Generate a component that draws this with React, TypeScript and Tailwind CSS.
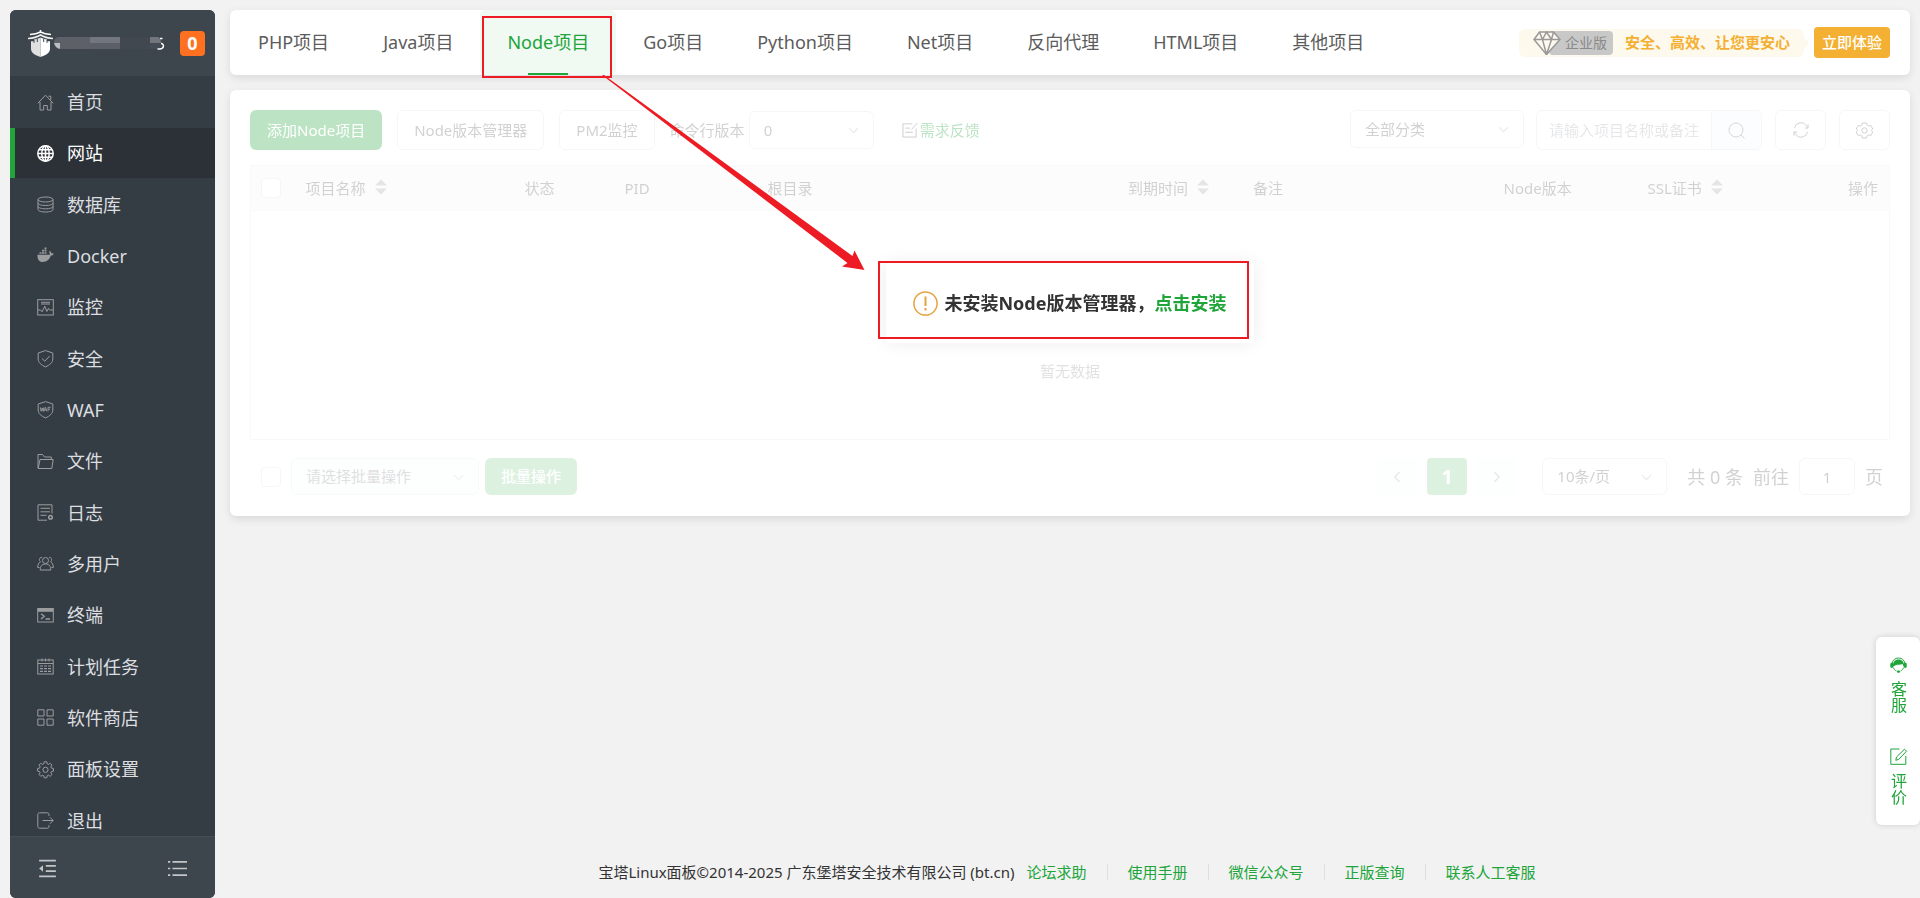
import type { ReactNode } from "react";
import { ChevronDown, ChevronLeft, ChevronRight } from "lucide-react";

const menuItems = [
  { id: "home", label: "首页" },
  { id: "site", label: "网站" },
  { id: "database", label: "数据库" },
  { id: "docker", label: "Docker" },
  { id: "monitor", label: "监控" },
  { id: "security", label: "安全" },
  { id: "waf", label: "WAF" },
  { id: "files", label: "文件" },
  { id: "logs", label: "日志" },
  { id: "users", label: "多用户" },
  { id: "terminal", label: "终端" },
  { id: "cron", label: "计划任务" },
  { id: "store", label: "软件商店" },
  { id: "settings", label: "面板设置" },
  { id: "logout", label: "退出" },
];

const tabs = ["PHP项目", "Java项目", "Node项目", "Go项目", "Python项目", "Net项目", "反向代理", "HTML项目", "其他项目"];

const columns = [
  { label: "项目名称", width: "w-[219px]", sortable: true },
  { label: "状态", width: "w-[100px]" },
  { label: "PID", width: "w-[143px]" },
  { label: "根目录", width: "w-[22%]" },
  { label: "到期时间", width: "w-[125px]", sortable: true },
  { label: "备注", width: "" },
  { label: "Node版本", width: "w-36" },
  { label: "SSL证书", width: "w-[133px]", sortable: true },
];

const footerLinks = ["论坛求助", "使用手册", "微信公众号", "正版查询", "联系人工客服"];

// Line icons of the menu, drawn on a 17px grid
const menuIcons: Record<string, ReactNode> = {
  home: (
    <>
      <path d="M.8 9.3 8.5 1.2l7.7 8.1" />
      <path d="M3 8v8h3.7v-4.5h3.6V16H14V8" />
      <path d="M11.5 2.2h2.3v3.5" />
    </>
  ),
  site: (
    <>
      <circle cx="8.5" cy="8.5" r="7.7" strokeWidth="1.5" />
      <ellipse cx="8.5" cy="8.5" rx="3.7" ry="7.7" strokeWidth="1.5" />
      <path d="M8.5 1v15M1 8.5h15M2 4.8h13M2 12.2h13" strokeWidth="1.5" />
    </>
  ),
  database: (
    <>
      <ellipse cx="8.5" cy="3.5" rx="7.5" ry="2.5" />
      <path d="M1 3.5v10C1 15 4.4 16 8.5 16s7.5-1 7.5-2.5v-10" />
      <path d="M1 7c0 1.5 3.4 2.5 7.5 2.5S16 8.5 16 7M1 10.3c0 1.5 3.4 2.5 7.5 2.5s7.5-1 7.5-2.5" />
    </>
  ),
  docker: (
    <>
      <path
        d="M.5 7.8h12.2c.2-1.2 0-2.2-.6-3l.8-.8c.9.6 1.3 1.4 1.4 2.2 1 0 1.8.1 2.4.5-.5 1.3-1.5 1.8-2.9 1.9-1.4 4.3-4 6.4-8.3 6.4C2 15 .3 12 .5 7.8z"
        fill="currentColor"
        stroke="none"
      />
      <path d="M2.5 6h2M5 6h2M7.5 6h2M5 3.7h2M7.5 3.7h2M7.5 1.4h2" strokeWidth="1.7" />
    </>
  ),
  monitor: (
    <>
      <rect x=".7" y=".7" width="15.6" height="15.3" />
      <path d="M4 3.3h9M4 5h9" />
      <path d="M1 11h2.5L5 12.8 7.8 7.2l2 5.3 1.6-3.2 1.1 1.7H16" />
    </>
  ),
  security: (
    <>
      <path d="M8.5.6 1.2 3v6c0 3.5 3 6 7.3 7.9 4.3-1.9 7.3-4.4 7.3-7.9V3z" />
      <path d="m5 8.5 2.8 2.7L12.6 6" />
    </>
  ),
  waf: (
    <>
      <path d="M8.5.6 1.2 3v6c0 3.5 3 6 7.3 7.9 4.3-1.9 7.3-4.4 7.3-7.9V3z" />
      <path d="m3.3 6.3.9 4L5.2 7l1 3.3.7-4M7 10.3l1.5-4 1.3 4M7.6 9h1.8M11 10.3v-4h2.6M11 8.2h2.2" strokeWidth=".9" />
    </>
  ),
  files: (
    <>
      <path d="M1 15V1.5h4.5L7.5 4h6.8v2.5" />
      <path d="M3 6.5h13.2L14.8 15.5H1.2z" />
    </>
  ),
  logs: (
    <>
      <path d="M15 9.5V.8H1v15.4h9" />
      <path d="M3.5 4.3H13M3.5 7.8H13M3.5 11.3h6" />
      <circle cx="13.5" cy="13.3" r="1.8" strokeWidth="1.5" />
    </>
  ),
  users: (
    <>
      <circle cx="8.5" cy="5.5" r="3" />
      <path d="M3.2 15c0-3.5 1.5-6 5.3-6s5.3 2.5 5.3 6z" />
      <path d="M5 2.4c-2.6-.4-3.5 3-1.5 4.4C1.6 7.6.7 10 .7 12.5h1.8M12 2.4c2.6-.4 3.5 3 1.5 4.4 1.9.8 2.8 3.2 2.8 5.7h-1.8" />
    </>
  ),
  terminal: (
    <>
      <rect x=".7" y="1.5" width="15.6" height="13.5" />
      <path d="M.7 3.3h15.6" strokeWidth="3" />
      <path d="m4 6.8 3.3 2.5L4 12M8.5 12h4.5" strokeWidth="1.3" />
    </>
  ),
  cron: (
    <>
      <rect x=".8" y="2" width="15.4" height="14" />
      <path d="M1 5.5h15M5 .5v3M8.5.5v3M12 .5v3" />
      <path d="M3 8h3M7 8h3M11 8h3M3 10.7h3M7 10.7h3M11 10.7h3M3 13.3h3M7 13.3h3M11 13.3h3" strokeWidth="1.2" />
    </>
  ),
  store: <path d="M.8.8H7V7H.8zM10 .8h6.2V7H10zM.8 10H7v6.2H.8zM10 10h6.2v6.2H10z" />,
  settings: (
    <>
      <path d="M7.2.8h2.6l.4 2 1.3.6 1.7-1.1 1.8 1.8-1.1 1.7.5 1.3 2.1.4v2.6l-2.1.4-.5 1.3 1.1 1.7-1.8 1.8-1.7-1.1-1.3.6-.4 2H7.2l-.4-2-1.3-.6-1.7 1.1L2 13.5l1.1-1.7-.5-1.3-2-.4V7.5l2-.4.5-1.3L2 4.1l1.8-1.8 1.7 1.1 1.3-.6z" />
      <circle cx="8.5" cy="8.8" r="2.6" />
    </>
  ),
  logout: (
    <>
      <path d="M12 4V2.5c0-1-.6-1.7-1.6-1.7H2.5C1.5.8.8 1.5.8 2.5v12c0 1 .7 1.7 1.7 1.7h7.9c1 0 1.6-.7 1.6-1.7V13" />
      <path d="M5.5 8.5H16M13 5.3l3.2 3.2-3.2 3.2" />
    </>
  ),
};

function LineIcon({ children, className = "" }: { children: ReactNode; className?: string }) {
  return (
    <svg viewBox="0 0 17 17" fill="none" stroke="currentColor" aria-hidden="true" className={`shrink-0 overflow-visible ${className}`}>
      {children}
    </svg>
  );
}

function Sidebar() {
  return (
    <aside className="mt-2.5 ml-2.5 flex w-[205px] shrink-0 flex-col overflow-hidden rounded-md bg-[#353d44]">
      <div className="flex h-[66px] shrink-0 items-center bg-[#3d454d] pr-2.5 pl-[18px]">
        {/* pagoda logo */}
        <svg viewBox="0 0 25 27" className="h-[27px] w-[25px] shrink-0" aria-hidden="true">
          <path d="M12.500 0v3M2 4.500c5-.2 8-1.200 10.500-2.500 2.500 1.300 5.500 2.300 10.500 2.500" fill="none" stroke="#fff" strokeWidth="1.500" />
          <path d="M0 8.500c5-.4 9.500-1.700 12.500-3.500 3 1.800 7.500 3.100 12.500 3.500" fill="none" stroke="#eee" strokeWidth="1.700" />
          <path d="M12.500 7.500c-2 1-4.500 1.700-6.500 2v1.700H3v7.600c0 4 4 6.700 9.500 8.200z" fill="#e0e0e0" />
          <path d="M12.500 7.500c2 1 4.500 1.700 6.500 2v1.700h3v7.600c0 4-4 6.700-9.500 8.200z" fill="#fff" />
          <path d="M6 9.800v3M9.300 9v3M15.700 9v3M19 9.800v3" stroke="#3d454d" />
        </svg>
        {/* masked server address */}
        <svg viewBox="0 0 112 17" className="h-[17px] w-28" aria-hidden="true">
          <path d="M7 2h30v12H7z" fill="#5d6067" />
          <path d="M37 2h30v12H37z" fill="#5b6068" />
          <path d="M37 2h30v6H37z" fill="#73777d" />
          <path d="M67 2h30v12H67z" fill="#414850" />
          <path d="M97 2h8q3 1 3 6H97z" fill="#73777d" />
          <path d="M97 8h10v6H97z" fill="#454b54" />
          <path d="M7 2H5Q1 3 1 8h6z" fill="#5d6067" />
          <path d="M1 8h6v6Q2 13 1 8z" fill="#b9bcc0" />
          <path d="M107 3.500h2.500M108 8.500c3.500 0 3.500 5.500-1.500 5.500h-2" fill="none" stroke="#fff" strokeWidth="1.500" />
        </svg>
        <span className="ml-auto flex size-[25px] items-center justify-center rounded bg-[#ff7021] text-lg font-bold text-white">0</span>
      </div>
      <nav className="min-h-0 flex-1 overflow-hidden">
        <ul className="grid h-[771px] auto-rows-fr pt-px">
          {menuItems.map((item) => {
            const isActive = item.id === "site";
            return (
              <li key={item.id}>
                <a
                  href={`#${item.id}`}
                  className={`flex h-[50px] items-center gap-[13px] border-l-5 pl-[22px] text-lg ${
                    isActive ? "border-[#20a53a] bg-[#2c3138] text-white" : "border-transparent text-[#dcdee0]"
                  }`}
                >
                  <LineIcon className={`size-[17px] ${isActive ? "text-white" : "text-[#9b9d9f]"}`}>{menuIcons[item.id]}</LineIcon>
                  {item.label}
                </a>
              </li>
            );
          })}
        </ul>
      </nav>
      <div className="flex h-[62px] shrink-0 items-center justify-between border-t border-[#454d55] bg-[#3d454d] px-7 pt-0.5 text-[#c3c5c7]">
        <button type="button" aria-label="收起菜单">
          <LineIcon className="size-[19px]">
            <path d="M1 1.500h15M7 6.200h9M7 10.800h9M1 15.500h15" strokeWidth="1.500" />
            <path d="M1 8.500 4.500 5.500v6z" fill="currentColor" stroke="none" />
          </LineIcon>
        </button>
        <button type="button" aria-label="菜单列表">
          <LineIcon className="size-[19px]">
            <path d="M4 2.500h13M4 8.500h13M4 14.500h13M0 2.500h2M0 8.500h2M0 14.500h2" strokeWidth="1.500" />
          </LineIcon>
        </button>
      </div>
    </aside>
  );
}

function TopTabs() {
  return (
    <header className="flex h-[65px] items-center rounded-md bg-white pr-5 pl-px shadow-[0_3px_8px_rgba(0,0,0,0.1)]">
      <nav className="flex h-full">
        {tabs.map((tab) => {
          const isActive = tab === "Node项目";
          return (
            <a
              key={tab}
              href={`#${tab}`}
              className={`relative flex items-center rounded-md px-[27px] pb-0.5 text-lg whitespace-nowrap ${
                isActive ? "bg-[#f0f9f2] text-[#20a53a]" : "text-[#5c5c5c]"
              }`}
            >
              {tab}
              {isActive && (
                <>
                  <span className="absolute bottom-0 left-1/2 h-0.5 w-10 -translate-x-1/2 bg-[#20a53a]" />
                  <span className="absolute top-1.5 right-1 -bottom-[3px] left-0.5 z-10 border-2 border-[#ed1c24]" />
                </>
              )}
            </a>
          );
        })}
      </nav>
      <div className="ml-auto flex items-center gap-2.5 whitespace-nowrap">
        <div className="relative flex h-7 items-center rounded-md bg-[#fef9ed] px-3.5">
          <svg viewBox="0 0 28 24" className="z-10 h-6 w-7" fill="none" stroke="#999" strokeWidth="1.500" aria-hidden="true">
            <path d="M6.500 1h14L27 8.500 13.500 23.500 1 8.500z" fill="#fef9ed" />
            <path d="M1 8.500h26M6.500 1l3 7.500 4 15 5-15L20.500 1M9.500 8.500 13.500 1l5 7.500" />
          </svg>
          <span className="-ml-3 flex h-6 items-center rounded-sm bg-[#c8c8c8] pr-1.5 pl-4 text-sm text-[#8a8a8a]">企业版</span>
          <span className="ml-3 text-[15px] font-bold text-[#f3b033]">安全、高效、让您更安心</span>
          <span className="absolute top-1/2 -right-1 size-2 -translate-y-1/2 rotate-45 bg-[#fef9ed]" />
        </div>
        <button type="button" className="h-[31px] rounded-sm bg-[#f3b033] px-2 text-[15px] font-medium text-white">
          立即体验
        </button>
      </div>
    </header>
  );
}

function SelectBox({ label, value, className = "" }: { label: string; value: string; className?: string }) {
  return (
    <span className={`relative block ${className}`}>
      <select
        aria-label={label}
        defaultValue={value}
        className="h-full w-full appearance-none rounded-md border border-[#dcdfe6] bg-transparent pl-3.5 text-[15px] text-[#666]"
      >
        <option>{value}</option>
      </select>
      <ChevronDown size={17} strokeWidth={1.5} className="pointer-events-none absolute top-[11px] right-3 text-[#b0b4bb]" />
    </span>
  );
}

function SortIcon() {
  return (
    <svg viewBox="0 0 12 16" className="mb-0.5 h-4 w-3" fill="#a4a8ae" aria-hidden="true">
      <path d="M6 .500 12 6.500H0zM6 15.500 12 9.500H0z" />
    </svg>
  );
}

function Toolbar() {
  return (
    <div className="flex items-center text-[15px] whitespace-nowrap text-[#666]">
      <button type="button" className="h-10 rounded-md bg-[#20a53a] px-[17px] text-white">
        添加Node项目
      </button>
      <button type="button" className="ml-[15px] h-10 rounded-md border border-[#dcdfe6] px-4">
        Node版本管理器
      </button>
      <button type="button" className="ml-[15px] h-10 rounded-md border border-[#dcdfe6] px-4">
        PM2监控
      </button>
      <span className="ml-[15px]">命令行版本</span>
      <SelectBox label="命令行版本" value="0" className="ml-1 h-[38px] w-[125px]" />
      <a href="#feedback" className="ml-7 flex items-center gap-0.5 text-[#20a53a]">
        <LineIcon className="size-4 text-[#555]">
          <path d="M11 2H1v14h14V7M3.500 6.500h5M3.500 11h8M10 8l6.500-7" />
        </LineIcon>
        需求反馈
      </a>
      <SelectBox label="分类" value="全部分类" className="mr-3 mb-0.5 ml-auto h-[38px] w-[174px]" />
      <div className="flex h-10 w-[226px] overflow-hidden rounded-md border border-[#dcdfe6]">
        <input
          type="text"
          aria-label="搜索项目"
          placeholder="请输入项目名称或备注"
          className="min-w-0 flex-1 pl-3 placeholder:text-[#adb0b6]"
        />
        <button type="button" aria-label="搜索" className="flex w-[50px] items-center justify-center border-l border-[#dcdfe6] bg-[#f5f7fa]">
          <LineIcon className="size-[17px] text-[#777]">
            <circle cx="8" cy="8" r="7" />
            <path d="m13 13 3.500 3.500" />
          </LineIcon>
        </button>
      </div>
      <button type="button" aria-label="刷新" className="ml-[13px] flex h-10 w-[51px] items-center justify-center rounded-md border border-[#dcdfe6]">
        <LineIcon className="size-4">
          <path d="M15.500 10.500A7 7 0 0 1 2.500 12.500L1 10.500M1.500 6.500A7 7 0 0 1 14.500 4.500L16 6.500" />
          <path d="M1 14.500v-4h3.500M16 2.500v4h-3.500" />
        </LineIcon>
      </button>
      <button type="button" aria-label="设置" className="ml-[13px] flex h-10 w-[51px] items-center justify-center rounded-md border border-[#dcdfe6]">
        <LineIcon className="size-[17px]">
          <path d="M6.500 1h4l.7 2.200 1.300.8 2.300-.5 2 3.500-1.600 1.500L16.800 10l-2 3.500-2.300-.5-1.300.8-.7 2.200h-4l-.7-2.200-1.300-.8-2.300.5-2-3.500 1.600-1.500L.2 7l2-3.500 2.300.5 1.300-.8z" />
          <circle cx="8.500" cy="8.500" r="2.700" />
        </LineIcon>
      </button>
    </div>
  );
}

function ProjectTable() {
  return (
    <table className="mt-[15px] w-full table-fixed border-collapse border border-[#e8eaed] text-left text-[15px] text-[#666]">
      <thead>
        <tr className="h-[45px] border-b border-[#ebeef5] bg-[#f5f5f5]">
          <th className="w-11 pl-2.5">
            <input
              type="checkbox"
              aria-label="全选"
              className="block size-5 appearance-none rounded-sm border border-[#dcdfe6] bg-white"
            />
          </th>
          {columns.map((col) => (
            <th key={col.label} className={`pl-[11px] font-normal whitespace-nowrap ${col.width}`}>
              <span className="flex items-center gap-[9px]">
                {col.label}
                {col.sortable && <SortIcon />}
              </span>
            </th>
          ))}
          <th className="w-30 pr-[11px] text-right font-normal">操作</th>
        </tr>
      </thead>
      <tbody>
        <tr className="h-[229px]">
          <td colSpan={10} className="pt-[92px] text-center text-[#999]">
            暂无数据
          </td>
        </tr>
      </tbody>
    </table>
  );
}

function Pagination() {
  return (
    <div className="mt-[18px] flex items-center text-[15px] whitespace-nowrap text-[#666]">
      <input type="checkbox" aria-label="选择全部项目" className="ml-[11px] size-5 appearance-none rounded-sm border border-[#dcdfe6]" />
      <SelectBox label="批量操作" value="请选择批量操作" className="ml-2.5 h-[37px] w-[188px] rounded-md bg-[#f5f7fa] opacity-70" />
      <button type="button" disabled className="ml-1.5 h-[37px] rounded-md bg-[#20a53a] px-4 font-medium text-white opacity-50">
        批量操作
      </button>
      <div className="ml-auto flex gap-2.5">
        <button type="button" aria-label="上一页" className="flex h-[37px] w-10 items-center justify-center rounded-sm bg-[#f9fafc] text-[#aaa]">
          <ChevronLeft size={18} strokeWidth={1.5} />
        </button>
        <button type="button" className="h-[37px] w-10 rounded-sm bg-[#20a53a]/50 text-xl font-bold text-white">
          1
        </button>
        <button type="button" aria-label="下一页" className="flex h-[37px] w-10 items-center justify-center rounded-sm bg-[#f9fafc] text-[#aaa]">
          <ChevronRight size={18} strokeWidth={1.5} />
        </button>
      </div>
      <SelectBox label="每页条数" value="10条/页" className="ml-[25px] h-[37px] w-[125px]" />
      <span className="ml-5 text-lg leading-6">共 0 条</span>
      <label htmlFor="page" className="ml-2.5 text-lg leading-6">
        前往
      </label>
      <input id="page" type="text" defaultValue="1" className="ml-2.5 h-[37px] w-14 rounded-md border border-[#dcdfe6] text-center" />
      <span className="mr-[7px] ml-2.5 text-lg leading-6">页</span>
    </div>
  );
}

function InstallNotice() {
  return (
    <div className="absolute top-[173px] left-1/2 flex h-20 w-[368px] -translate-x-1/2 items-center justify-center rounded-sm bg-white text-lg font-bold whitespace-nowrap text-[#333] shadow-[0_0_18px_rgba(0,0,0,0.08)]">
      <svg viewBox="0 0 25 25" className="mr-1.5 size-[25px]" fill="none" stroke="#e6a23c" strokeWidth="1.500" aria-hidden="true">
        <circle cx="12.500" cy="12.500" r="11.600" />
        <path d="M12.500 5.500v9.500M12.500 17v2.500" strokeWidth="2" />
      </svg>
      未安装Node版本管理器，
      <a href="#install" className="text-[#20a53a]">
        点击安装
      </a>
      <span className="absolute -top-0.5 right-[5px] bottom-1 -left-2 border-2 border-[#ed1c24]" />
    </div>
  );
}

function SupportBar() {
  return (
    <div className="fixed right-0 bottom-[73px] flex h-[188px] w-11 flex-col items-center justify-between rounded-md bg-white pt-5 pb-5 text-base text-[#20a53a] shadow-[0_0_6px_rgba(0,0,0,0.15)]">
      <a href="#service" className="flex flex-col items-center gap-2">
        <svg viewBox="0 0 17 16" className="h-4 w-[17px]" fill="none" stroke="currentColor" aria-hidden="true">
          <path d="M2 6.500C2.700 3 5.200 1 8.500 1S14.300 3 15 6.500" />
          <path d="M3 9.500C2.600 5 5 2.500 8.500 2.500S14.400 5 14 9.500c-.8-.6-1.300-1.500-1.500-2.500-2 1.200-5 .3-7 1.200-.8.500-1.500 1-2.500 1.300z" fill="currentColor" stroke="none" />
          <rect x=".3" y="5.800" width="2.900" height="5.200" rx="1.400" fill="currentColor" stroke="none" />
          <rect x="13.800" y="5.800" width="2.900" height="5.200" rx="1.400" fill="currentColor" stroke="none" />
          <path d="M3.300 10.500c.8 1.800 1.700 2.900 3.200 3.500M13.700 10.500c-.8 1.800-1.700 2.900-3.200 3.500" />
          <rect x="7" y="13.500" width="3" height="2.200" rx="1" fill="currentColor" stroke="none" />
        </svg>
        <span className="[writing-mode:vertical-rl]">客服</span>
      </a>
      <a href="#review" className="flex flex-col items-center gap-2">
        <LineIcon className="size-[17px]">
          <path d="M9.500 1H.800v15.300h15V8" />
          <path d="M5.800 12.300 6.500 9l8-7.800 2 2-7.700 8.100z" />
        </LineIcon>
        <span className="[writing-mode:vertical-rl]">评价</span>
      </a>
    </div>
  );
}

export default function App() {
  return (
    <div className="flex h-screen bg-[#f2f2f2] font-['Noto_Sans','Noto_Sans_CJK_SC',sans-serif]">
      <Sidebar />
      <main className="relative flex min-w-0 flex-1 flex-col pt-2.5 pr-2.5 pl-[15px]">
        <TopTabs />
        <section className="relative mt-[15px] rounded-md bg-white px-5 pt-5 pb-[21px] shadow-[0_3px_8px_rgba(0,0,0,0.1)]">
          <div className="opacity-30">
            <Toolbar />
            <ProjectTable />
            <Pagination />
          </div>
          <InstallNotice />
        </section>
        {/* arrow from the active tab to the install notice */}
        <svg viewBox="0 0 263 196" className="pointer-events-none absolute top-[75px] left-[387px] z-20 h-[196px] w-[263px]" fill="#ed1c24" aria-hidden="true">
          <path d="M0 0 2 0 250.500 181 252.500 175.500 262.500 195 240 191.500 245.500 188z" />
        </svg>
        <footer className="mt-auto flex h-[52px] items-center justify-center pr-1.5 text-[15px] whitespace-nowrap text-[#333]">
          <span className="mr-3">宝塔Linux面板©2014-2025 广东堡塔安全技术有限公司 (bt.cn)</span>
          {footerLinks.map((link, i) => (
            <span key={link} className="flex items-center">
              {i > 0 && <span className="mx-5 h-4 w-px bg-[#dcdfe6]" />}
              <a href={`#${link}`} className="text-[#20a53a]">
                {link}
              </a>
            </span>
          ))}
        </footer>
      </main>
      <SupportBar />
    </div>
  );
}
